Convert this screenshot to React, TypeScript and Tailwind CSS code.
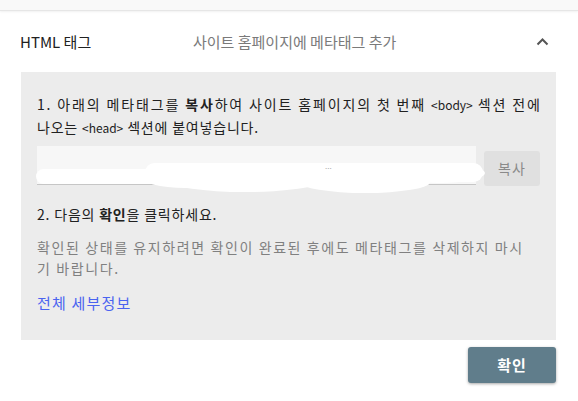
export default function App() {
  const font = { fontFamily: '"Noto Sans CJK KR", "Noto Sans", sans-serif' }
  return (
    <div className="w-[578px] h-[401px] bg-white overflow-hidden text-[#212121]" style={font}>
      <div className="h-[11px] bg-[#f9f9f9] border-b border-[#e6e6e6] shadow-[0_1px_2px_rgba(0,0,0,0.06)]" />

      {/* accordion header */}
      <div className="h-[61px] flex items-center pl-[20px] pr-[29px]">
        <div className="w-[173px] text-[15px] leading-none">HTML 태그</div>
        <div className="text-[15px] leading-none text-[#7a7a7a]">사이트 홈페이지에 메타태그 추가</div>
        <svg className="ml-auto" width="13" height="8" viewBox="0 0 13 8">
          <polyline points="1.5,6.5 6.5,1.5 11.5,6.5" fill="none" stroke="#555" strokeWidth="2" />
        </svg>
      </div>

      {/* panel */}
      <div className="mx-[21px] w-[535px] bg-[#ececec] px-4 pt-[21px] pb-[26px]">
        <p className="text-[14px] leading-[22px] whitespace-nowrap">
          <span className="tracking-[1.85px]">1. 아래의 메타태그를 <b>복사</b>하여 사이트 홈페이지의 첫 번째 </span>
          <span className="text-[12px]">&lt;body&gt;</span>
          <span className="tracking-[1.85px]"> 섹션 전에</span>
          <br />
          <span className="tracking-[0.8px]">나오는 </span>
          <span className="text-[12px]">&lt;head&gt;</span>
          <span className="tracking-[0.8px]"> 섹션에 붙여넣습니다.</span>
        </p>

        <div className="relative mt-[7px] flex gap-2 items-start">
          <div className="w-[439px] h-[39px] bg-[#f7f7f7] border-b border-[#c6c6c6]" />
          <button className="mt-[5px] w-[56px] h-[35px] rounded-[3px] bg-[#e0e0e0] text-[14px] text-[#8a8a8a] tracking-[1px]">복사</button>
          {/* redaction scribble */}
          <svg className="absolute left-[-2px] top-[14px]" width="452" height="34" viewBox="0 0 452 34">
            <g fill="#fff">
              <rect x="1" y="9" width="140" height="15" rx="7.5" />
              <ellipse cx="150" cy="16" rx="45" ry="12" />
              <ellipse cx="210" cy="21" rx="75" ry="11" />
              <ellipse cx="330" cy="22" rx="65" ry="11" />
              <rect x="110" y="3" width="338" height="19" rx="9.5" />
              <ellipse cx="405" cy="13" rx="45" ry="10" />
            </g>
            <text x="290" y="9" fontSize="8" fill="#aaa">...</text>
          </svg>
        </div>

        <p className="mt-[17px] text-[14px] leading-[22px] tracking-[0.8px]">
          2. 다음의 <b>확인</b>을 클릭하세요.
        </p>
        <p className="mt-[12px] text-[14px] leading-[21px] text-[#808080] whitespace-nowrap tracking-[1.6px]">
          확인된 상태를 유지하려면 확인이 완료된 후에도 메타태그를 삭제하지 마시
          <br />
          기 바랍니다.
        </p>
        <p className="mt-[13px] text-[15px] leading-[22px] tracking-[1.2px] text-[#4a63f0]">전체 세부정보</p>
      </div>

      <div className="flex justify-end pr-[22px] pt-[7px]">
        <button className="w-[88px] h-[36px] rounded-[3px] bg-[#607d8b] text-white text-[15px] font-bold tracking-[1px] shadow-[0_1px_3px_rgba(0,0,0,0.35)]">
          확인
        </button>
      </div>
    </div>
  )
}
